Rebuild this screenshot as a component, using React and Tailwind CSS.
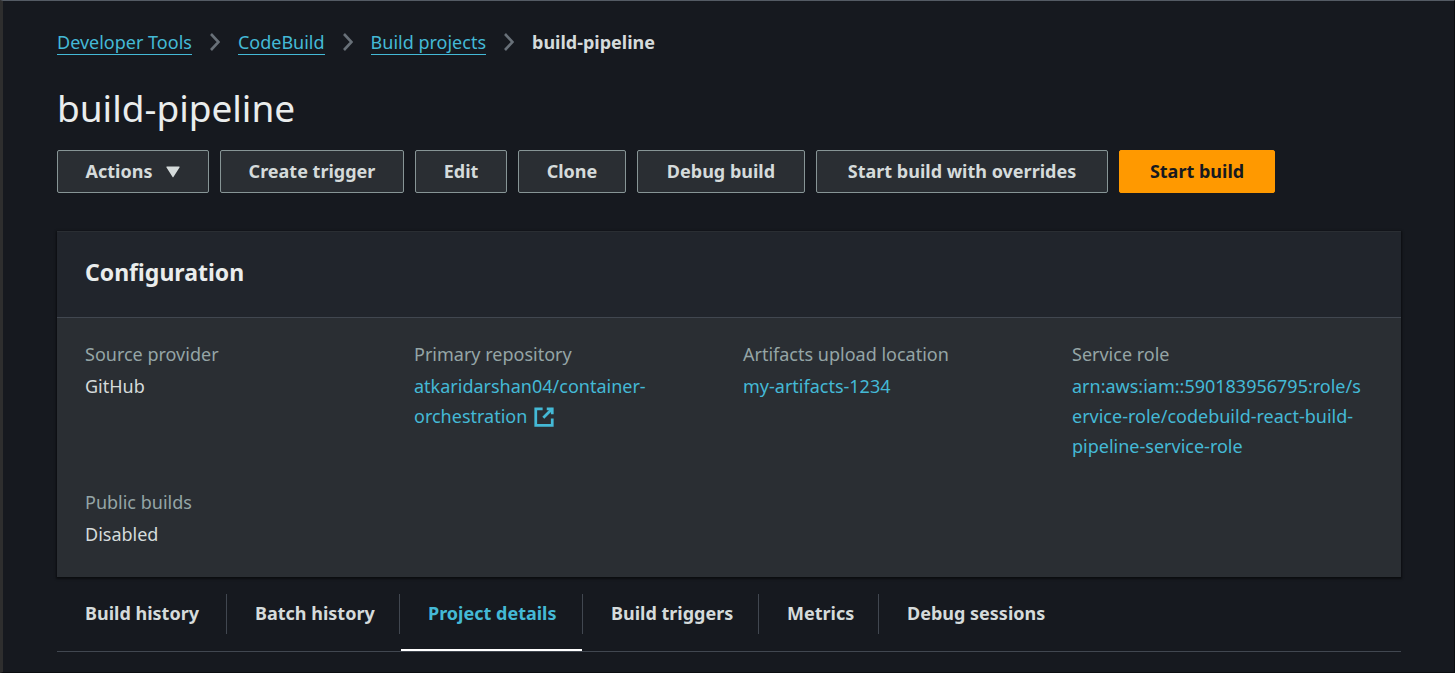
import { Fragment } from "react";

const crumbs = ["Developer Tools", "CodeBuild", "Build projects"];

const actions = [
  { label: "Actions", width: "min-w-[152px]", menu: true },
  { label: "Create trigger", width: "min-w-[184px]" },
  { label: "Edit", width: "min-w-[92px]" },
  { label: "Clone", width: "min-w-[108px]" },
  { label: "Debug build", width: "min-w-[168px]" },
  { label: "Start build with overrides", width: "min-w-[292px]" },
  { label: "Start build", width: "min-w-[156px]", primary: true },
];

const tabs = [
  { label: "Build history", width: "w-[170px]" },
  { label: "Batch history", width: "w-[173px]" },
  { label: "Project details", width: "w-[183px]", active: true },
  { label: "Build triggers", width: "w-[176px]" },
  { label: "Metrics", width: "w-[120px]" },
  { label: "Debug sessions", width: "w-[190px]" },
];

function Chevron() {
  return (
    <svg viewBox="0 0 10 18" className="h-[18px] w-[10px] shrink-0" fill="none" stroke="#687078" strokeWidth="2.6" aria-hidden="true">
      <path d="M1 1l7.5 8L1 17" />
    </svg>
  );
}

function ExternalIcon() {
  return (
    <svg viewBox="0 0 16 16" className="mb-[2px] ml-[6px] inline-block size-[22px] align-middle" fill="none" stroke="currentColor" strokeWidth="2" aria-hidden="true">
      <path d="M10 2h4v4" />
      <path d="M7.5 8.5L14 2" />
      <path d="M14 9.05V14H2V2h5" />
    </svg>
  );
}

function Field({ label, children }) {
  return (
    <div className="flex min-w-0 flex-col gap-[2px]">
      <dt className="text-[#95a5a6]">{label}</dt>
      <dd className="wrap-anywhere text-[#d5dbdb]">{children}</dd>
    </div>
  );
}

function FieldLink({ children }) {
  return (
    <a href="#" className="text-[#44b9d6] hover:underline">
      {children}
    </a>
  );
}

export default function App() {
  return (
    <div className="min-h-screen border-t border-r border-b border-l-3 border-t-[#545b64] border-r-[#0b0d10] border-b-[#0b0d10] border-l-[#2e2e2e] bg-[#16191f] pr-[53px] pl-[54px] font-['Noto_Sans',sans-serif] text-[18px] text-[#d5dbdb]">
      <nav aria-label="Breadcrumb" className="flex items-start gap-[18px] pt-[29px] leading-6">
        {crumbs.map((crumb) => (
          <Fragment key={crumb}>
            <a href="#" className="border-b border-[#44b9d6] text-[#44b9d6]">
              {crumb}
            </a>
            <span className="flex h-6 items-center">
              <Chevron />
            </span>
          </Fragment>
        ))}
        <span className="font-bold" aria-current="page">
          build-pipeline
        </span>
      </nav>

      <h1 className="mt-[29px] text-[37px] leading-12 text-[#eaeded]">build-pipeline</h1>

      <div className="mt-[18px] flex flex-wrap gap-[11px]">
        {actions.map(({ label, width, menu, primary }) => (
          <button
            key={label}
            type="button"
            className={`flex h-[43px] items-center justify-center gap-[14px] rounded-[2px] border font-bold whitespace-nowrap ${width} ${
              primary ? "border-[#ff9900] bg-[#ff9900] text-[#16191f]" : "border-[#879596] bg-[#2a2e33] text-[#d5dbdb]"
            }`}
          >
            {label}
            {menu && (
              <svg viewBox="0 0 14 12" className="h-3 w-[14px]" fill="currentColor" aria-hidden="true">
                <path d="M1 .5h12a.6.6 0 0 1 .5 1L7.6 10.8a.7.7 0 0 1-1.2 0L.5 1.500a.6.6 0 0 1 .5-1z" />
              </svg>
            )}
          </button>
        ))}
      </div>

      <section className="mt-[38px] border-t border-[#2a2e33] bg-[#2a2e33] shadow-[0_1px_2px_1px_rgba(0,0,0,0.5)]">
        <header className="border-b border-[#414750] bg-[#21252c] px-7 pt-[25px] pb-[30px]">
          <h2 className="text-[23px] leading-[30px] font-bold text-[#eaeded]">Configuration</h2>
        </header>
        <dl className="grid grid-cols-4 gap-x-7 gap-y-[26px] px-7 pt-[21px] pb-7 leading-[30px]">
          <Field label="Source provider">GitHub</Field>
          <Field label="Primary repository">
            <FieldLink>
              atkaridarshan04/container-orchestration
              <ExternalIcon />
            </FieldLink>
          </Field>
          <Field label="Artifacts upload location">
            <FieldLink>my-artifacts-1234</FieldLink>
          </Field>
          <Field label="Service role">
            <FieldLink>arn:aws:iam::590183956795:role/s<wbr />ervice-role/codebuild-react-build-pipeline-service-role</FieldLink>
          </Field>
          <Field label="Public builds">Disabled</Field>
        </dl>
      </section>

      <div role="tablist" className="flex border-b border-[#414750]">
        {tabs.map(({ label, width, active }, i) => (
          <button
            key={label}
            type="button"
            role="tab"
            aria-selected={Boolean(active)}
            className={`relative flex h-[74px] items-center text-left font-bold whitespace-nowrap ${width} ${
              active ? "text-[#44b9d6] after:absolute after:right-px after:bottom-0 after:left-px after:h-[2px] after:bg-white" : ""
            }`}
          >
            <span className={`flex h-10 grow items-center pb-[2px] pl-7 ${i < tabs.length - 1 ? "border-r border-[#414750]" : ""}`}>{label}</span>
          </button>
        ))}
      </div>
    </div>
  );
}
